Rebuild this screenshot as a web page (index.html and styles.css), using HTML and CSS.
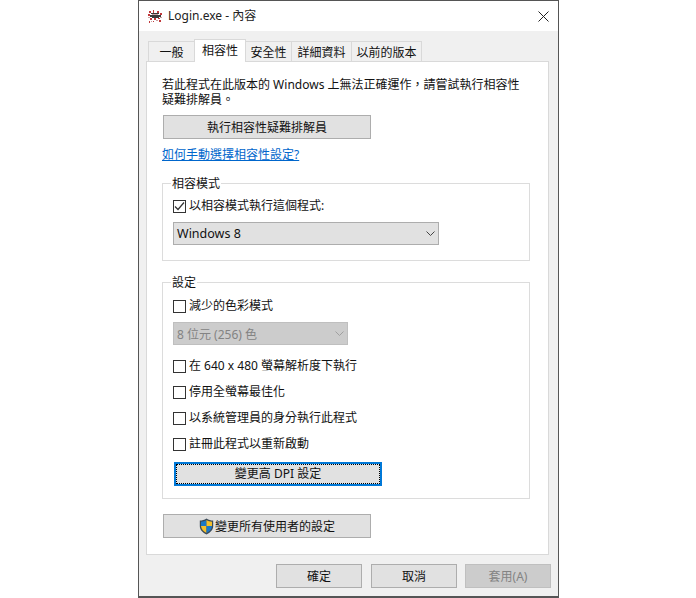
FILE: index.html
```html
<!DOCTYPE html>
<html lang="zh-Hant">
<head>
    <meta charset="UTF-8">
    <title>Login.exe - 內容</title>
    <link rel="stylesheet" href="styles.css">
</head>
<body>
<div class="win">
    <div class="title">
        <svg class="app-icon" width="16" height="16" viewBox="0 0 16 16">
            <path d="M2 3h2v2H2zM6 2h1v3H6zM10 3h2v2h-2zM13 5h2v2h-2zM1 6h2v2H1zM3 10h2v2H3zM7 10h2v2H7zM11 10h2v1h-2zM2 13h1v2H2zM6 13h1v1H6zM12 12h2v2h-2z" fill="#c0393b"/>
            <path d="M4 5h8v1H4zM3 7h11v2H3zM5 9h7v1H5z" fill="#3a3a3a"/>
            <path d="M5 6h6v1H5zM1 9h2v1H1zM13 9h2v1h-2zM9 12h2v1H9zM4 13h1v1H4z" fill="#c9a3a3"/>
        </svg>
        <span class="title-text">Login.exe - 內容</span>
        <svg class="close" width="11" height="11" viewBox="0 0 11 11">
            <path d="M.5.5l10 10M10.500.5l-10 10" stroke="#222" fill="none"/>
        </svg>
    </div>
    <div class="body">
        <ul class="tabs">
            <li class="w46">一般</li>
            <li class="cur">相容性</li>
            <li class="w47">安全性</li>
            <li class="w60">詳細資料</li>
            <li class="w70">以前的版本</li>
        </ul>
        <div class="panel">
            <p class="intro">若此程式在此版本的 Windows 上無法正確運作，請嘗試執行相容性<br>疑難排解員。</p>
            <button class="btn wide">執行相容性疑難排解員</button>
            <a class="link" href="#">如何手動選擇相容性設定?</a>
            <fieldset class="group mode">
                <legend>相容模式</legend>
                <div class="check"><span class="box on"><svg width="11" height="11" viewBox="0 0 11 11"><path d="M1 5.500l3 3 6-7" stroke="#333" stroke-width="1.2" fill="none"/></svg></span>以相容模式執行這個程式:</div>
                <div class="combo big">Windows 8<svg width="9" height="6" viewBox="0 0 9 6"><path d="M.5.5l4 4 4-4" stroke="#444" fill="none"/></svg></div>
            </fieldset>
            <fieldset class="group settings">
                <legend>設定</legend>
                <div class="check"><span class="box"></span>減少的色彩模式</div>
                <div class="combo small off">8 位元 (256) 色<svg width="9" height="6" viewBox="0 0 9 6"><path d="M.5.5l4 4 4-4" stroke="#a0a0a0" fill="none"/></svg></div>
                <div class="check"><span class="box"></span>在 640 x 480 螢幕解析度下執行</div>
                <div class="check"><span class="box"></span>停用全螢幕最佳化</div>
                <div class="check"><span class="box"></span>以系統管理員的身分執行此程式</div>
                <div class="check"><span class="box"></span>註冊此程式以重新啟動</div>
                <button class="btn focus"><span>變更高 DPI 設定</span></button>
            </fieldset>
            <button class="btn wide all">
                <svg width="15" height="17" viewBox="0 0 15 17">
                    <path d="M7.500.5C5.500 2 3 2.600 .8 2.600v5.400c0 3.800 3 6.800 6.700 8.500 3.700-1.700 6.700-4.700 6.700-8.500V2.600C12 2.600 9.500 2 7.500.5z" fill="#3c4a57"/>
                    <path d="M7.500 2C6 3 4 3.600 2 3.700V8h5.500z" fill="#1a78c8"/>
                    <path d="M7.500 2c1.500 1 3.500 1.600 5.500 1.700V8H7.500z" fill="#f5c02c"/>
                    <path d="M2 8h5.500v7C4.700 13.600 2.200 11.200 2 8z" fill="#f5c02c"/>
                    <path d="M13 8H7.500v7c2.800-1.400 5.300-3.800 5.500-7z" fill="#1a78c8"/>
                </svg>變更所有使用者的設定
            </button>
        </div>
        <div class="foot">
            <button class="btn act">確定</button>
            <button class="btn act">取消</button>
            <button class="btn act off">套用(A)</button>
        </div>
    </div>
</div>
</body>
</html>
```
FILE: styles.css
```css
*{
    margin: 0;
    padding: 0;
    list-style: none;
    box-sizing: border-box;
}
body{
    background: #fff;
    font-family: "Noto Sans", "Noto Sans CJK TC", sans-serif;
    font-size: 12px;
    color: #111;
}
.win{
    width: 421px;
    height: 598px;
    margin-left: 138px;
    border: 1px solid #555;
    border-bottom-width: 2px;
    background: #f0f0f0;
    display: flex;
    flex-direction: column;
}
.title{
    height: 30px;
    flex: none;
    background: #fff;
    display: flex;
    align-items: center;
    padding: 0 9px 0 8px;
}
.app-icon{
    margin-right: 5px;
}
.title-text{
    flex: 1;
    line-height: 16px;
    color: #222;
}
.body{
    flex: 1;
    padding: 8px 9px 0 7px;
    display: flex;
    flex-direction: column;
}
.tabs{
    display: flex;
    height: 22px;
    padding-left: 2px;
    align-items: flex-end;
    position: relative;
    z-index: 1;
}
.tabs li{
    height: 20px;
    line-height: 21px;
    text-align: center;
    background: #f0f0f0;
    border: 1px solid #d9d9d9;
    border-bottom: none;
    margin-right: -1px;
}
.tabs .w46{
    width: 47px;
}
.tabs .w47{
    width: 47px;
}
.tabs .w60{
    width: 61px;
}
.tabs .w70{
    width: 71px;
}
.tabs .cur{
    width: 52px;
    height: 23px;
    margin-bottom: -1px;
    line-height: 21px;
    background: #fff;
    position: relative;
    z-index: 2;
}
.panel{
    height: 494px;
    background: #fff;
    border: 1px solid #d9d9d9;
    padding: 15px 15px 0;
    display: flex;
    flex-direction: column;
    align-items: flex-start;
}
.intro{
    line-height: 15px;
    height: 30px;
}
.btn{
    font: inherit;
    color: #111;
    background: #e1e1e1;
    border: 1px solid #adadad;
    height: 24px;
    display: flex;
    align-items: center;
    justify-content: center;
}
.wide{
    width: 208px;
    margin: 8px 0 0 1px;
}
.link{
    color: #0066cc;
    line-height: 16px;
    margin-top: 8px;
}
.group{
    width: 368px;
    border: 1px solid #dcdcdc;
    padding: 7px 10px 0;
}
.group legend{
    margin-left: -2px;
    padding: 0 1px;
    line-height: 18px;
    height: 16px;
}
.mode{
    height: 86px;
    margin-top: 12px;
}
.settings{
    height: 225px;
    margin-top: 13px;
    padding-top: 8px;
}
.check{
    display: flex;
    align-items: center;
    height: 16px;
    line-height: 16px;
}
.settings .check{
    margin-top: 10px;
}
.settings .check:first-of-type{
    margin-top: 0;
}
.box{
    width: 13px;
    height: 13px;
    border: 1px solid #333;
    background: #fff;
    margin-right: 3px;
    display: flex;
    align-items: center;
    justify-content: center;
}
.combo{
    height: 23px;
    background: #e1e1e1;
    border: 1px solid #adadad;
    display: flex;
    align-items: center;
    justify-content: space-between;
    padding: 0 3px 0 3px;
}
.big{
    width: 266px;
    margin-top: 8px;
    font-size: 12.5px;
}
.small{
    width: 175px;
    margin: 8px 0 13px;
}
.off{
    background: #ccc;
    border-color: #bfbfbf;
    color: #838383;
}
.focus{
    width: 208px;
    margin: 10px 0 0 1px;
    padding: 0;
    border: 2px solid #0078d7;
}
.focus span{
    display: block;
    width: 100%;
    line-height: 18px;
    height: 20px;
    border: 1px dotted #000;
    text-align: center;
}
.all{
    margin-top: 15px;
}
.all svg{
    margin-right: 1px;
}
.foot{
    display: flex;
    justify-content: flex-end;
    gap: 9px;
    padding-top: 9px;
    margin-right: -2px;
}
.act{
    width: 86px;
}
.act.off{
    margin-left: -1px;
}
```
